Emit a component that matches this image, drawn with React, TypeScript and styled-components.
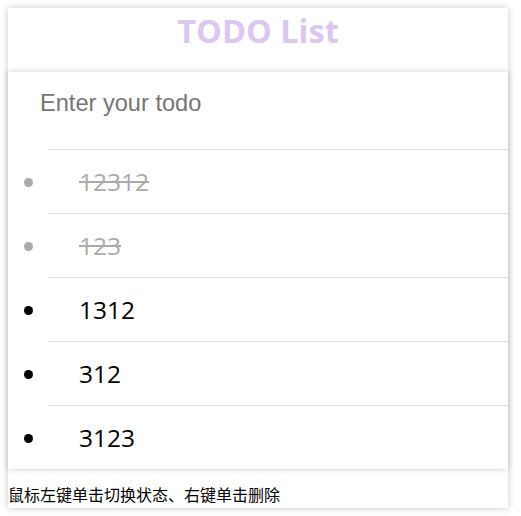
import React from "react";
import styled, { createGlobalStyle } from "styled-components";

const Global = createGlobalStyle`
  body {
    margin: 0;
    background: #fff;
    font-family: "Open Sans", "Noto Sans", "Noto Sans CJK SC", sans-serif;
  }
`;

const Page = styled.div`
  padding: 8px;
`;

const Frame = styled.div`
  width: 500px;
  height: 500px;
  box-sizing: border-box;
  background: #fff;
  box-shadow: 0 0 7px rgba(0, 0, 0, 0.22);
  display: flex;
  flex-direction: column;
`;

const Header = styled.header`
  height: 64px;
  text-align: center;
`;

const Title = styled.h1`
  margin: 0;
  font-family: "Open Sans", "Noto Sans", sans-serif;
  font-size: 32.5px;
  font-weight: 700;
  color: #dcc7ee;
`;

const Main = styled.section`
  background: #fff;
  box-shadow: 0 0 6px rgba(0, 0, 0, 0.2);
  position: relative;
`;

const TodoInput = styled.input`
  display: block;
  width: 100%;
  box-sizing: border-box;
  height: 62px;
  border: none;
  outline: none;
  padding: 0 32px;
  font-family: "Liberation Sans", Arial, sans-serif;
  font-size: 23.6px;
  background: transparent;
  &::placeholder {
    color: #757575;
  }
`;

const List = styled.ul`
  margin: 15px 0 0;
  padding: 0 0 0 40px;
  list-style: disc outside;
`;

const Item = styled.li<{ $done: boolean }>`
  height: 64px;
  box-sizing: border-box;
  border-top: 1px solid #e0e0e0;
  padding-left: 31px;
  line-height: 63px;
  font-family: "Open Sans", "Noto Sans", sans-serif;
  font-size: 24.5px;
  color: ${(p) => (p.$done ? "#aaaaaa" : "#000")};
  text-decoration: ${(p) => (p.$done ? "line-through" : "none")};
  cursor: pointer;
  user-select: none;
`;

const Hint = styled.p`
  margin: 14px 0 0;
  font-family: "Noto Sans CJK SC", "Microsoft YaHei", sans-serif;
  font-size: 16px;
  line-height: 22px;
  color: #000;
`;

const todos = [
  { text: "12312", done: true },
  { text: "123", done: true },
  { text: "1312", done: false },
  { text: "312", done: false },
  { text: "3123", done: false },
];

export default function App() {
  return (
    <Page>
      <Global />
      <Frame>
        <Header>
          <Title>TODO List</Title>
        </Header>
        <Main>
          <TodoInput placeholder="Enter your todo" />
          <List>
            {todos.map((t, i) => (
              <Item key={i} $done={t.done}>
                {t.text}
              </Item>
            ))}
          </List>
        </Main>
        <Hint>鼠标左键单击切换状态、右键单击删除</Hint>
      </Frame>
    </Page>
  );
}
